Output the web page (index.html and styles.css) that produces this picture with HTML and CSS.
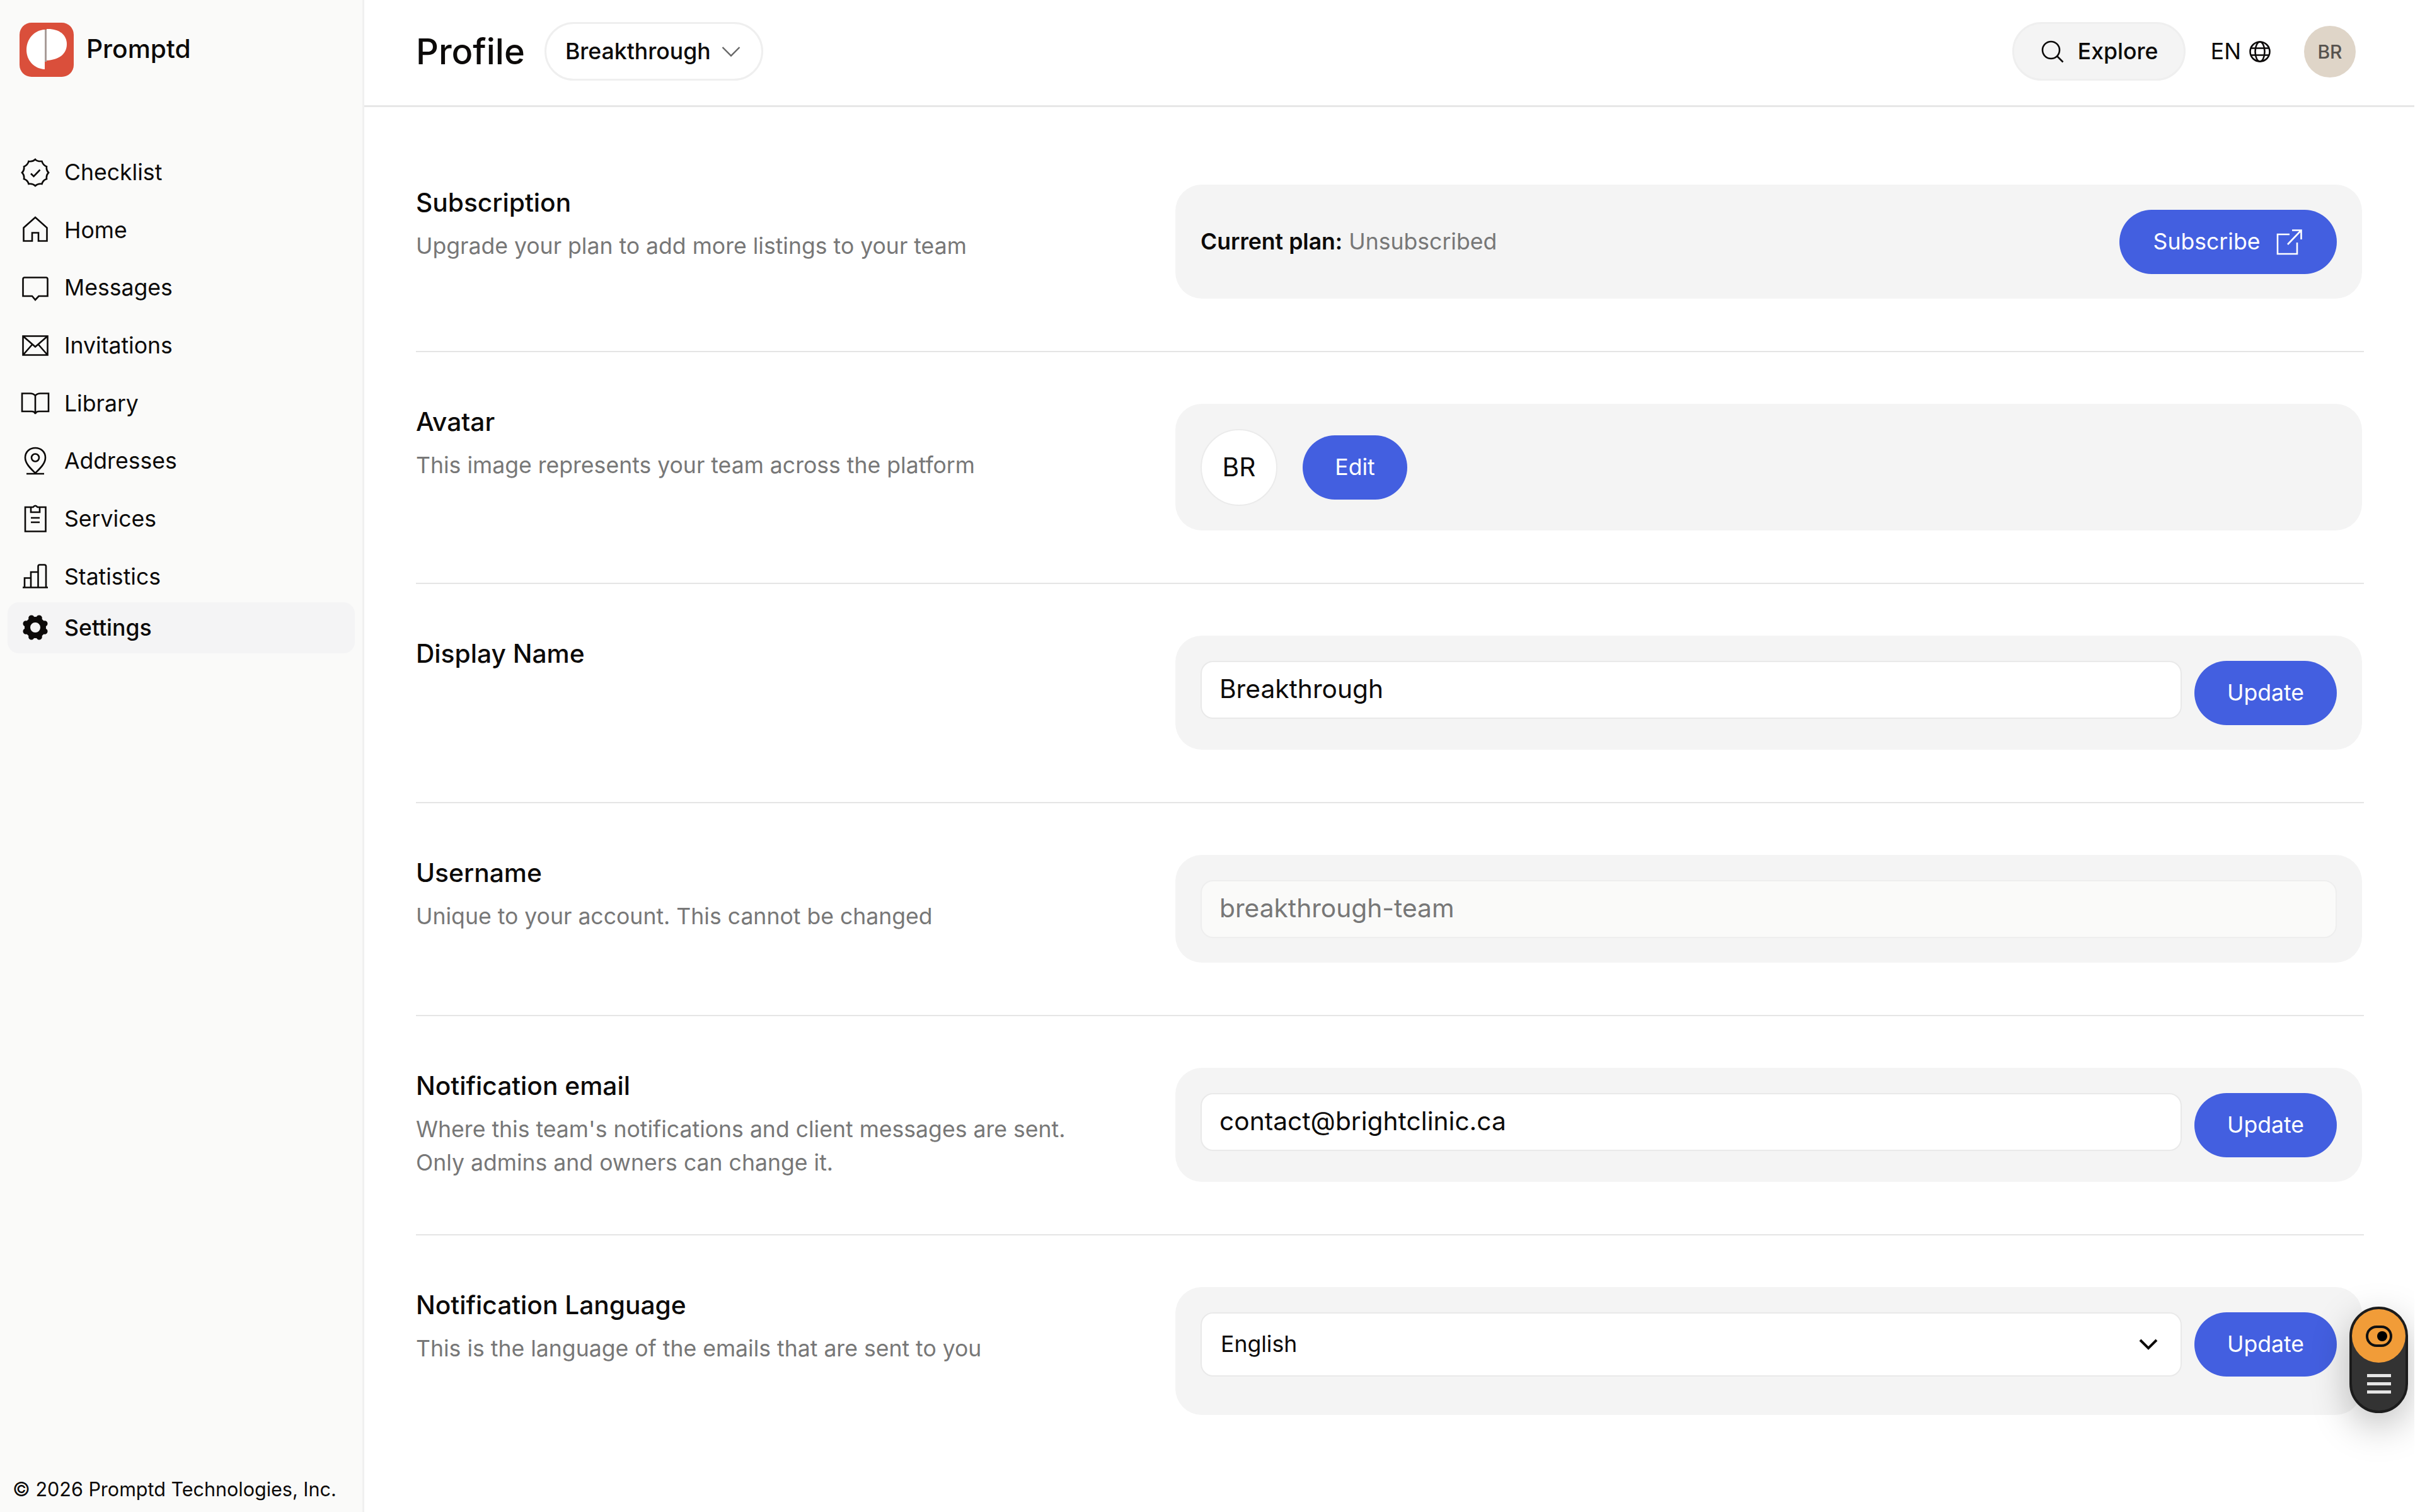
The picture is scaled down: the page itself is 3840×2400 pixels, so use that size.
FILE: index.html
```html
<!DOCTYPE html>
<html lang="en">
<head>
    <meta charset="UTF-8">
    <title>Profile - Promptd</title>
    <link rel="stylesheet" href="styles.css">
</head>
<body>

<div class="app">
    <aside class="sidebar">
        <div class="brand">
            <svg class="logo" viewBox="0 0 86 86">
                <rect width="86" height="86" rx="19" fill="#da4f3b"/>
                <path d="M40 11 V74 C23 73 11 60 11 43 C11 26 23 12 40 11 Z" fill="#fff"/>
                <path d="M43 10 C61 9 75 18 75 34 C75 50 62 59 43 60 Z" fill="#fff"/>
                <path d="M41.500 11 V62" stroke="#a89c98" stroke-width="3"/>
            </svg>
            <span>Promptd</span>
        </div>

        <nav class="menu">
            <a href="#">
                <svg class="icon" viewBox="0 0 48 48"><path d="M24 3 Q27 6.500 34.500 6 Q36 12 42 14.500 Q41 20 45 24 Q41 28 42 34 Q36 36 34.500 42 Q28 41 24 45 Q20 41 13.500 42 Q12 36 6 34 Q7 28 3 24 Q7 20 6 14.500 Q12 12 13.500 6 Q20 7 24 3 Z"/><path d="M17 25.500 L21.500 30 L31.500 19.500"/></svg>
                Checklist
            </a>
            <a href="#">
                <svg class="icon" viewBox="0 0 48 48"><path d="M5.500 20.500 L24 4 L42.500 20.500 V41.500 H29 V28.500 H19 V41.500 H5.500 Z"/></svg>
                Home
            </a>
            <a href="#">
                <svg class="icon" viewBox="0 0 48 48"><path d="M7 7.500 H41 Q43.500 7.500 43.500 10 V37 H29.500 L24 43 L19 37 H4.500 V10 Q4.500 7.500 7 7.500 Z"/></svg>
                Messages
            </a>
            <a href="#">
                <svg class="icon" viewBox="0 0 48 48"><path d="M4.500 8.500 H43.500 V38.500 H4.500 Z M4.500 8.500 L24 25.500 L43.500 8.500 M4.500 38.500 L19 22 M43.500 38.500 L29 22"/></svg>
                Invitations
            </a>
            <a href="#">
                <svg class="icon" viewBox="0 0 48 48"><path d="M24 12 Q21 8.500 16 8.500 H3 V37 H18 Q23 37 24 41 Q25 37 30 37 H45 V8.500 H32 Q27 8.500 24 12 V40"/></svg>
                Library
            </a>
            <a href="#">
                <svg class="icon" viewBox="0 0 48 48"><path d="M24 43 C17 36 8 28 8 18.500 C8 9 15 3 24 3 C33 3 40 9 40 18.500 C40 28 31 36 24 43 Z M10 44 H38"/><circle cx="24" cy="18.500" r="6"/></svg>
                Addresses
            </a>
            <a href="#">
                <svg class="icon" viewBox="0 0 48 48"><path d="M17 5 H8 V43.500 H40.500 V5 H31 M17 5 V13 H31 V5 L27.500 5 Q24 0.500 20.500 5 Z M17 22 H31 M17 29 H31"/></svg>
                Services
            </a>
            <a href="#">
                <svg class="icon" viewBox="0 0 48 48"><path d="M4 41.500 H44 M7 41.500 V26.500 H17 M17 41.500 V17 H28.500 M28.500 41.500 V8 Q28.500 5.500 31 5.500 H38.500 Q41 5.500 41 8 V41.500"/></svg>
                Statistics
            </a>
            <a href="#" class="active">
                <svg class="icon" viewBox="0 0 48 48"><path class="gear" d="M9.200 17.900 L38.800 30.100 M9.200 30.100 L38.800 17.900 M17.900 9.200 L30.100 38.800 M30.100 9.200 L17.900 38.800"/><circle class="gear-ring" cx="24" cy="24" r="12.500"/></svg>
                Settings
            </a>
        </nav>

        <footer>© 2026 Promptd Technologies, Inc.</footer>
    </aside>

    <div class="page">
        <header>
            <h1>Profile</h1>
            <button class="pill team">
                Breakthrough
                <svg class="chevron" viewBox="0 0 30 18"><path d="M1.500 2 L15 15.500 L28.500 2"/></svg>
            </button>
            <div class="tools">
                <button class="pill explore">
                    <svg class="icon-sm" viewBox="0 0 36 36"><circle cx="15.500" cy="15.500" r="13.500"/><path d="M25.500 25.500 L34.500 34.500"/></svg>
                    Explore
                </button>
                <div class="lang">
                    EN
                    <svg class="icon-sm" viewBox="0 0 36 36"><circle cx="18" cy="18" r="15.500"/><ellipse cx="18" cy="18" rx="7.500" ry="15.500"/><path d="M4 12.500 H32 M4 23.500 H32"/></svg>
                </div>
                <div class="user">BR</div>
            </div>
        </header>

        <main>
            <section class="row">
                <div class="info">
                    <h2>Subscription</h2>
                    <p>Upgrade your plan to add more listings to your team</p>
                </div>
                <div class="card plan">
                    <p><b>Current plan:</b> Unsubscribed</p>
                    <button class="btn subscribe">
                        Subscribe
                        <svg class="external" viewBox="0 0 42 42"><path d="M21 9 H2 V40 H33 V22 M18 25 L39 3 M25 2.500 H39.500 V17"/></svg>
                    </button>
                </div>
            </section>

            <section class="row">
                <div class="info">
                    <h2>Avatar</h2>
                    <p>This image represents your team across the platform</p>
                </div>
                <div class="card avatar-card">
                    <div class="avatar">BR</div>
                    <button class="btn edit">Edit</button>
                </div>
            </section>

            <section class="row">
                <div class="info">
                    <h2>Display Name</h2>
                </div>
                <div class="card">
                    <input type="text" value="Breakthrough">
                    <button class="btn">Update</button>
                </div>
            </section>

            <section class="row">
                <div class="info">
                    <h2>Username</h2>
                    <p>Unique to your account. This cannot be changed</p>
                </div>
                <div class="card">
                    <input type="text" value="breakthrough-team" disabled>
                </div>
            </section>

            <section class="row">
                <div class="info">
                    <h2>Notification email</h2>
                    <p>Where this team's notifications and client messages are sent.<br>Only admins and owners can change it.</p>
                </div>
                <div class="card">
                    <input type="text" value="contact@brightclinic.ca">
                    <button class="btn">Update</button>
                </div>
            </section>

            <section class="row">
                <div class="info">
                    <h2>Notification Language</h2>
                    <p>This is the language of the emails that are sent to you</p>
                </div>
                <div class="card language">
                    <div class="select">
                        English
                        <svg viewBox="0 0 30 18"><path d="M2 2 L15 15 L28 2"/></svg>
                    </div>
                    <button class="btn">Update</button>
                </div>
            </section>
        </main>
    </div>

    <!-- floating accessibility switch -->
    <div class="widget">
        <div class="widget-eye">
            <svg viewBox="0 0 44 36"><rect x="3" y="3" width="38" height="30" rx="15"/><circle cx="27" cy="18" r="8"/></svg>
        </div>
        <div class="widget-menu"><i></i><i></i><i></i></div>
    </div>
</div>

</body>
</html>
```
FILE: styles.css
```css
* {
    box-sizing: border-box;
}

body {
    margin: 0;
    background: #fff;
    color: #0c0a09;
    font-family: Inter, "Liberation Sans", sans-serif;
    font-size: 35.6px;
}

h1, h2, p {
    margin: 0;
    font-weight: 400;
}

button, input {
    font-family: inherit;
    color: inherit;
}

svg {
    display: block;
    flex: none;
    fill: none;
    stroke: currentColor;
    stroke-width: 2.6;
}

.app {
    position: relative;
    display: flex;
    width: 3831px;
    height: 2400px;
    overflow: hidden;
}

/* sidebar */
.sidebar {
    width: 578px;
    flex: none;
    display: flex;
    flex-direction: column;
    background: #fafaf9;
    border-right: 3px solid #f0f0f0;
}

.brand {
    display: flex;
    align-items: center;
    gap: 20px;
    height: 86px;
    margin: 36px 0 0 31px;
    font-size: 40.7px;
    font-weight: 500;
    line-height: 48px;
}

.brand span {
    margin-bottom: 2px;
}

.logo {
    width: 86px;
    height: 86px;
    stroke: none;
}

.menu {
    display: flex;
    flex-direction: column;
    gap: 10.7px;
    margin: 111px 12px 0;
}

.menu a {
    display: flex;
    align-items: center;
    gap: 22px;
    height: 81px;
    padding-left: 20px;
    border-radius: 18px;
    color: inherit;
    text-decoration: none;
}

.menu .active {
    margin-top: -10.7px;
    background: #f4f4f5;
    font-weight: 500;
}

.icon {
    width: 48px;
    height: 48px;
}

.gear {
    stroke-width: 9.5;
    stroke-linecap: round;
}

.gear-ring {
    stroke-width: 9;
    fill: #f4f4f5;
}

.sidebar footer {
    margin: auto 0 18px 20px;
    font-size: 30.5px;
}

/* top bar */
.page {
    flex: 1;
}

header {
    display: flex;
    align-items: center;
    height: 170px;
    padding: 0 93px 4px 82px;
    border-bottom: 3px solid #e7e7e7;
}

h1 {
    font-size: 56px;
    font-weight: 500;
}

.pill {
    display: flex;
    align-items: center;
    height: 93px;
    border: 3px solid #efefef;
    border-radius: 47px;
    font-size: 35.6px;
    font-weight: 500;
}

.team {
    width: 347px;
    margin-left: 31px;
    padding: 0 0 0 30px;
    gap: 17px;
    background: #fff;
}

.chevron {
    width: 30px;
    height: 18px;
    stroke: #666;
    stroke-width: 2.4;
}

.tools {
    display: flex;
    align-items: center;
    margin-left: auto;
}

.explore {
    width: 275px;
    padding: 0 0 0 43px;
    gap: 22px;
    background: #f4f4f4;
}

.icon-sm {
    width: 36px;
    height: 36px;
}

.lang {
    display: flex;
    align-items: center;
    gap: 12px;
    margin: 0 52px 0 40px;
}

.user {
    display: flex;
    align-items: center;
    justify-content: center;
    width: 82px;
    height: 82px;
    border-radius: 50%;
    background: #dfd5c8;
    color: #57534e;
    font-size: 30px;
    font-weight: 500;
}

/* settings rows */
main {
    padding: 41px 80px 0 82px;
}

.row {
    display: flex;
    justify-content: space-between;
    padding: 82px 3px 83px 0;
    border-bottom: 2px solid #e5e5e5;
}

.row:last-child {
    border-bottom: none;
}

h2 {
    font-size: 40.7px;
    font-weight: 500;
    line-height: 58px;
}

.info p {
    margin-top: 13px;
    color: #777;
    line-height: 53px;
}

.card {
    display: flex;
    align-items: flex-start;
    gap: 20px;
    width: 1883px;
    padding: 39.500px 40px;
    border-radius: 42px;
    background: #f4f4f4;
}

.plan {
    align-items: center;
    justify-content: space-between;
    color: #777;
}

.plan b {
    color: #0c0a09;
    font-weight: 600;
}

.avatar-card {
    align-items: center;
    gap: 40px;
}

.avatar {
    display: flex;
    align-items: center;
    justify-content: center;
    width: 122px;
    height: 122px;
    border: 2px solid #ebebeb;
    border-radius: 50%;
    background: #fff;
    font-size: 40.7px;
}

.btn {
    display: flex;
    align-items: center;
    justify-content: center;
    width: 226px;
    height: 102px;
    padding: 0;
    border: none;
    border-radius: 51px;
    background: #435fe0;
    color: #fff;
    font-size: 35.6px;
}

.subscribe {
    width: 345px;
    gap: 26px;
}

.edit {
    width: 166px;
}

.external {
    width: 42px;
    height: 42px;
}

.card input {
    flex: 1;
    height: 92px;
    padding: 0 28px 3px;
    border: 2px solid #e9e9e9;
    border-radius: 20px;
    background: #fff;
    font-size: 40.7px;
}

.card input:disabled {
    background: #fafaf9;
    border-color: #eee;
    color: #777;
}

.language {
    height: 203px;
}

.select {
    flex: 1;
    display: flex;
    align-items: center;
    justify-content: space-between;
    height: 102px;
    padding: 0 36px 0 30px;
    border: 2px solid #e9e9e9;
    border-radius: 20px;
    background: #fff;
}

.select svg {
    width: 30px;
    height: 18px;
    stroke-width: 4;
}

/* widget */
.widget {
    position: absolute;
    right: 10px;
    top: 2074px;
    width: 93px;
    height: 169px;
    border: 4px solid #1c1c1c;
    border-radius: 47px;
    background: #333;
    box-shadow: 0 20px 60px rgba(0, 0, 0, 0.25);
}

.widget-eye {
    display: flex;
    align-items: center;
    justify-content: center;
    height: 85px;
    border-radius: 50%;
    background: #f19c38;
}

.widget-eye svg {
    width: 44px;
    height: 36px;
    stroke: #111;
    stroke-width: 4;
}

.widget-eye circle {
    fill: #000;
    stroke: none;
}

.widget-menu {
    display: flex;
    flex-direction: column;
    align-items: center;
    gap: 8px;
    margin-top: 18px;
}

.widget-menu i {
    width: 38px;
    height: 5px;
    background: #e5e5e5;
}
```
